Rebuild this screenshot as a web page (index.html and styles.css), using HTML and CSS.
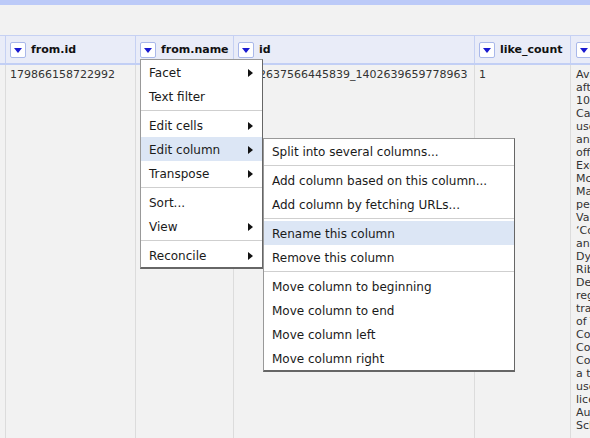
FILE: index.html
```html
<!DOCTYPE html>
<html>
<head>
<meta charset="utf-8">
<link rel="stylesheet" href="styles.css">
</head>
<body>
<div class="topbar"></div>
<div class="toolbar"></div>
<div class="grid">
  <div class="row head">
    <div class="cell c0"></div>
    <div class="cell c1"><span class="btn"></span><span class="hname">from.id</span></div>
    <div class="cell c2"><span class="btn"></span><span class="hname">from.name</span></div>
    <div class="cell c3"><span class="btn"></span><span class="hname">id</span></div>
    <div class="cell c4"><span class="btn"></span><span class="hname">like_count</span></div>
    <div class="cell c5"><span class="btn"></span><span class="hname">message</span></div>
  </div>
  <div class="row data">
    <div class="cell c0"></div>
    <div class="cell c1">179866158722992</div>
    <div class="cell c2"></div>
    <div class="cell c3">1402637566445839_1402639659778963</div>
    <div class="cell c4">1</div>
    <div class="cell c5 msg">Available to all
after the
10 days
Call for
users of
any
offer
Exclusive
McDonald
Make
people
Valentine
‘Coca-Cola’
and
Dynamic
Ribbon
Device
registered
trademarks
of The
Coca-Cola
Company
Coca-Cola
a trademark
used under
license
Australia
School</div>
  </div>
</div>

<div class="menu main-menu">
  <div class="item">Facet<span class="arrow"></span></div>
  <div class="item">Text filter</div>
  <div class="sep"></div>
  <div class="item">Edit cells<span class="arrow"></span></div>
  <div class="item active">Edit column<span class="arrow"></span></div>
  <div class="item">Transpose<span class="arrow"></span></div>
  <div class="sep"></div>
  <div class="item">Sort...</div>
  <div class="item">View<span class="arrow"></span></div>
  <div class="sep"></div>
  <div class="item">Reconcile<span class="arrow"></span></div>
</div>

<div class="menu sub-menu">
  <div class="item">Split into several columns...</div>
  <div class="sep"></div>
  <div class="item">Add column based on this column...</div>
  <div class="item">Add column by fetching URLs...</div>
  <div class="sep"></div>
  <div class="item active">Rename this column</div>
  <div class="item">Remove this column</div>
  <div class="sep"></div>
  <div class="item">Move column to beginning</div>
  <div class="item">Move column to end</div>
  <div class="item">Move column left</div>
  <div class="item">Move column right</div>
</div>
</body>
</html>
```

FILE: styles.css
```css
html, body {
  margin: 0;
  padding: 0;
  width: 590px;
  height: 438px;
  overflow: hidden;
  background: #f2f2f2;
  font-family: "DejaVu Sans", sans-serif;
}
.topbar {
  height: 5px;
  background: #bccaf8;
}
.toolbar {
  height: 30px;
  background: #f2f2f2;
}
.grid {
  width: 900px;
}
.row {
  display: flex;
}
.head {
  height: 27px;
  background: #e9ecf8;
  border-top: 1px solid #c6d1f3;
  border-bottom: 2px solid #c2cff5;
}
.cell {
  box-sizing: border-box;
  border-left: 1px solid #dcdcdc;
  padding-left: 4px;
  font-size: 11px;
  color: #333;
  flex: none;
}
.head .cell {
  border-left-color: #c6d1f3;
  display: flex;
  align-items: center;
  gap: 5px;
}
.c0 { width: 5px; border-left: none; padding: 0; }
.c1 { width: 130px; }
.c2 { width: 98px; }
.c3 { width: 241px; }
.c4 { width: 96px; }
.c5 { width: 330px; padding-left: 5px; }
.hname {
  font-weight: bold;
  color: #111;
  font-size: 11px;
}
.btn {
  box-sizing: border-box;
  width: 16px;
  height: 16px;
  background: #fff;
  border: 1px solid #a9b8ea;
  border-radius: 2px;
  position: relative;
  flex: none;
}
.btn::after {
  content: "";
  position: absolute;
  left: 3px;
  top: 5px;
  border-left: 4px solid transparent;
  border-right: 4px solid transparent;
  border-top: 5px solid #1a1ad0;
}
.data .cell {
  padding-top: 3px;
  line-height: 13px;
  min-height: 380px;
}
.msg {
  white-space: pre-line;
}
.menu {
  position: absolute;
  background: #fff;
  border: 1px solid #999;
  border-right-color: #666;
  border-bottom: 2px solid #666;
  font-size: 12px;
  color: #1a1a1a;
}
.main-menu {
  left: 140px;
  top: 59px;
  width: 121px;
}
.sub-menu {
  left: 263px;
  top: 138px;
  width: 250px;
}
.item {
  box-sizing: border-box;
  height: 24px;
  line-height: 22px;
  padding-top: 2px;
  padding-left: 8px;
  position: relative;
  white-space: nowrap;
}
.item.active {
  background: #dce6f5;
}
.arrow {
  position: absolute;
  right: 9px;
  top: 9px;
  border-top: 4px solid transparent;
  border-bottom: 4px solid transparent;
  border-left: 5px solid #111;
}
.sep {
  height: 1px;
  background: #cfcfcf;
  margin: 2px 0;
}
```
